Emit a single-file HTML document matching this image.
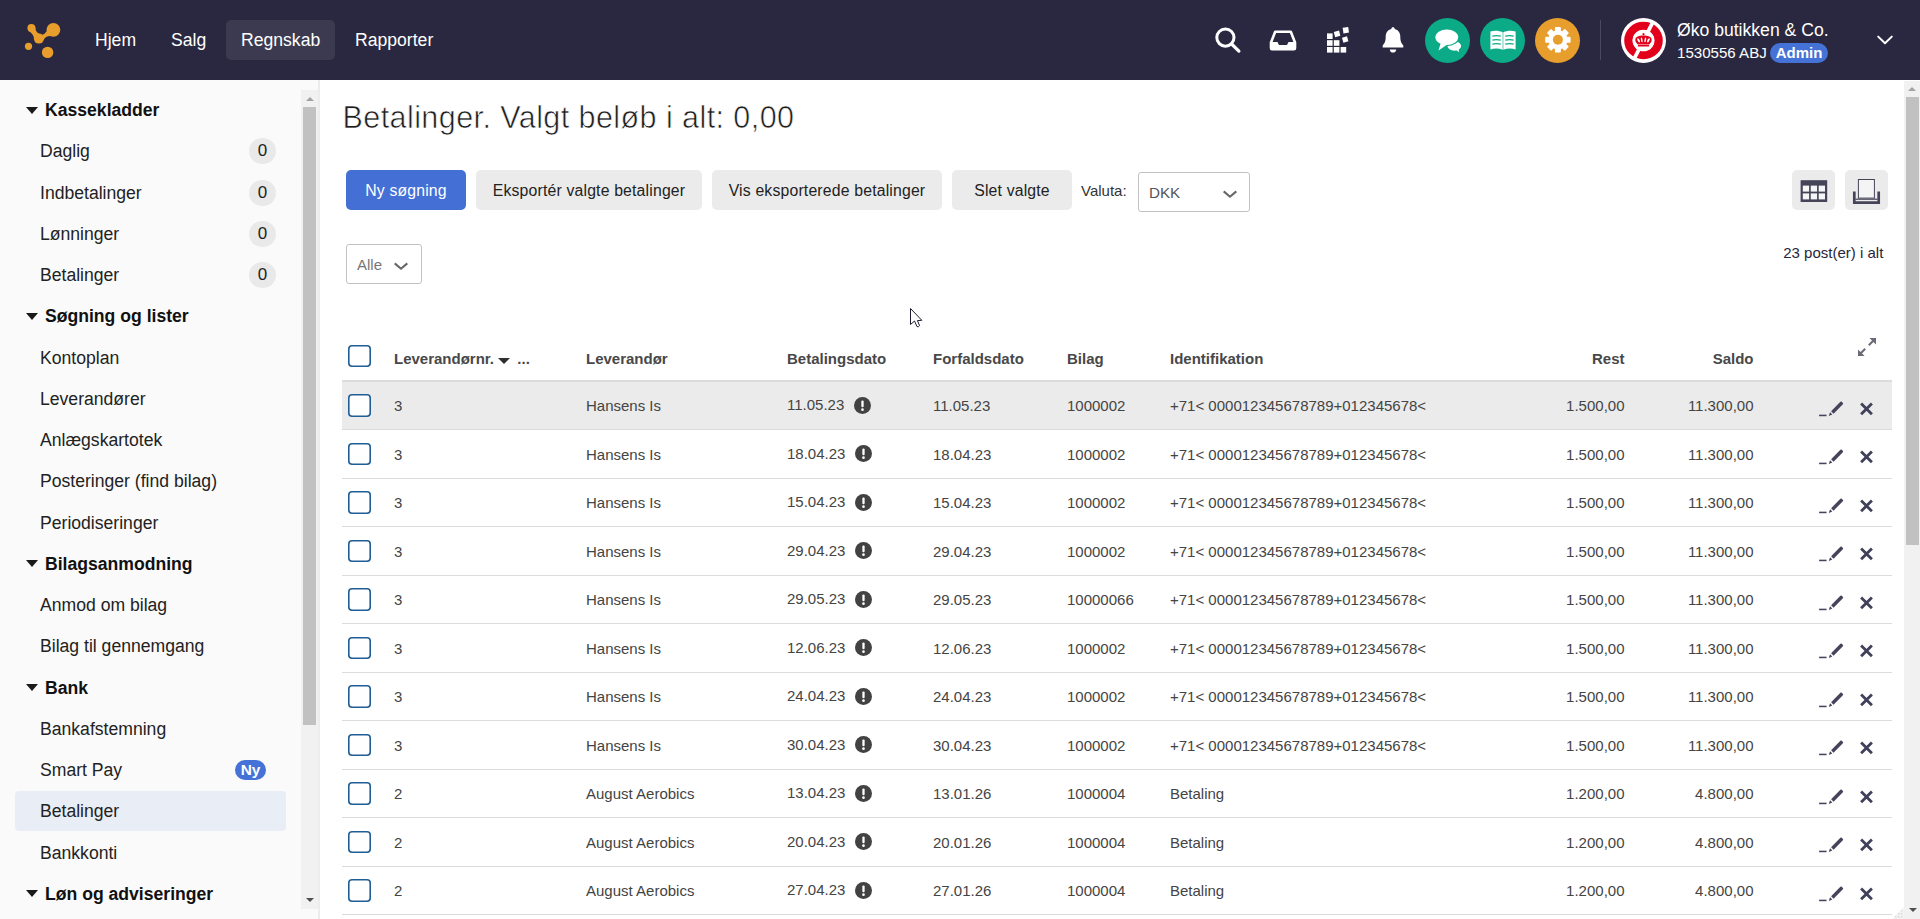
<!DOCTYPE html>
<html lang="da">
<head>
<meta charset="utf-8">
<title>Betalinger</title>
<style>
*{box-sizing:border-box;margin:0;padding:0}
html,body{width:1920px;height:919px;overflow:hidden;background:#fff;font-family:"Liberation Sans",Arial,sans-serif;color:#1f1f1f}
.abs{position:absolute}
/* header */
#hdr{position:absolute;left:0;top:0;width:1920px;height:80px;background:#2a2840;color:#fff}
#hdr .nav{position:absolute;top:26px;font-size:17.6px;line-height:28px;height:28px;white-space:nowrap}
#hdr .navsel{position:absolute;left:226px;top:20px;width:109px;height:40px;border-radius:5px;background:#3c3a50}
.circ{position:absolute;top:17.5px;width:45px;height:45px;border-radius:50%}
#cname{position:absolute;left:1677px;top:19px;font-size:17.6px;line-height:22px;white-space:nowrap}
#cnum{position:absolute;left:1677px;top:43px;font-size:15.1px;line-height:20px;white-space:nowrap}
#admin{position:absolute;left:1770px;top:43px;width:58px;height:20px;border-radius:10px;background:#4472d6;font-size:15px;font-weight:bold;line-height:20px;text-align:center}
/* sidebar */
#side{position:absolute;left:0;top:80px;width:320px;height:839px;background:#fafafa;border-right:2px solid #ececec;overflow:hidden}
#side .h{position:absolute;left:45px;font-size:17.6px;font-weight:bold;line-height:24px;height:24px;white-space:nowrap;color:#111}
#side .h:before{content:"";position:absolute;left:-19.2px;top:8.6px;border-left:6.6px solid transparent;border-right:6.6px solid transparent;border-top:7.6px solid #1a1a1a}
#side .i{position:absolute;left:40px;font-size:17.6px;line-height:24px;height:24px;white-space:nowrap;color:#222}
#side .b{position:absolute;left:249px;width:27px;height:26px;border-radius:13px;background:#e9e9e9;font-size:17px;line-height:26px;text-align:center;color:#222}
#side .sel{position:absolute;left:15px;top:711px;width:271px;height:40px;border-radius:4px;background:#e9edf6}
#side .ny{position:absolute;left:235px;top:680px;width:31px;height:20px;border-radius:10px;background:#4472d6;color:#fff;font-size:15.4px;font-weight:bold;line-height:19px;text-align:center}
/* main */
#main{position:absolute;left:320px;top:80px;width:1585px;height:839px;background:#fff;overflow:hidden}
#title{position:absolute;font-size:30.5px;line-height:40px;font-weight:normal;color:#1d1d1d;white-space:nowrap;letter-spacing:.43px;-webkit-text-stroke:.6px #fff}
.btn{position:absolute;top:90px;height:40px;border-radius:5px;background:#ebebeb;font-size:15.8px;letter-spacing:.17px;line-height:42px;text-align:center;color:#222;white-space:nowrap}
.btn.pri{background:#4470d6;color:#fff}
.selbox{position:absolute;border:1px solid #c2c2c2;border-radius:3px;background:#fff;font-size:15px;color:#555}
table{border-collapse:collapse}
#grid{position:absolute;left:20px;top:255px;width:1550px}
.row{position:absolute;left:0;width:1550px;border-bottom:1px solid #dcdcdc;font-size:15px;color:#444}
.row span{position:absolute;line-height:20px;white-space:nowrap}
.cb{position:absolute;width:23px;height:22.5px;box-shadow:inset 0 0 0 1.6px #1f5f96;border-radius:4px;background:#fff}
.th{position:absolute;top:.5px;font-size:15px;font-weight:bold;line-height:46px;color:#484848;white-space:nowrap}
#vsb{position:absolute;left:1904px;top:81px;width:16px;height:838px;background:#f1f1f1}
</style>
</head>
<body>
<div id="hdr">
<div class="abs" style="left:0;top:0;width:120px;height:80px">
<svg width="120" height="80" viewBox="0 0 120 80">
<g fill="#e89e2c">
<circle cx="31.4" cy="28" r="4"/>
<circle cx="53.4" cy="29.8" r="6.9"/>
<circle cx="38.9" cy="38.6" r="5"/>
<circle cx="28.5" cy="46.3" r="3.6"/>
<circle cx="47.6" cy="52.4" r="5.7"/>
<path d="M35.2 26.8 Q35.4 33.4 41.6 35 Q44.8 34.4 46.9 31 L50.5 35.9 Q45.2 36 43.7 40 L34 39.5 Q34.8 35.4 29.2 31.2 Z"/>
</g>
</svg>
</div>
<div class="navsel"></div>
<div class="nav" style="left:95px">Hjem</div>
<div class="nav" style="left:171px">Salg</div>
<div class="nav" style="left:241px">Regnskab</div>
<div class="nav" style="left:355px">Rapporter</div>
<!-- search -->
<svg class="abs" style="left:1212px;top:24px" width="32" height="32" viewBox="0 0 32 32"><circle cx="13.4" cy="13.6" r="8.6" fill="none" stroke="#fff" stroke-width="3"/><path d="M19.6 20 L26.9 27.1" stroke="#fff" stroke-width="3.2" stroke-linecap="round"/></svg>
<!-- inbox -->
<svg class="abs" style="left:1268px;top:28px" width="30" height="24" viewBox="0 0 30 24"><path d="M7.2 3.8 H22.8 L27 14.5 V20.2 Q27 21.3 25.9 21.3 H4.1 Q3 21.3 3 20.2 V14.5 Z" fill="none" stroke="#fff" stroke-width="2.6" stroke-linejoin="round"/><path d="M3 14 H9.5 L11 17 H19 L20.5 14 H27 V21 H3 Z" fill="#fff"/></svg>
<!-- grid -->
<svg class="abs" style="left:1325px;top:26px" width="26" height="28" viewBox="0 0 26 28"><g fill="#fff"><rect x="2" y="7.4" width="5.6" height="5.6"/><rect x="2" y="14.2" width="5.6" height="5.6"/><rect x="2" y="21" width="5.6" height="5.6"/><rect x="8.8" y="14.2" width="5.6" height="5.6"/><rect x="8.8" y="21" width="5.6" height="5.6"/><rect x="15.6" y="21" width="5.6" height="5.6"/><rect x="9.4" y="5.2" width="5.4" height="5.4" transform="rotate(-14 12 8)"/><rect x="18" y="1.4" width="5.6" height="5.6" transform="rotate(-8 21 4)"/><rect x="17.6" y="11" width="5.2" height="5.2" transform="rotate(-16 20 13.6)"/></g></svg>
<!-- bell -->
<svg class="abs" style="left:1381px;top:26px" width="24" height="28" viewBox="0 0 24 28"><path d="M12 1.2 C13 1.2 13.7 1.9 13.7 2.9 C17.3 3.8 19.3 6.9 19.3 10.6 C19.3 15.6 20.4 17.6 22.3 19.4 V21.6 H1.7 V19.4 C3.6 17.6 4.7 15.6 4.7 10.6 C4.7 6.9 6.7 3.8 10.3 2.9 C10.3 1.9 11 1.2 12 1.2 Z" fill="#fff"/><path d="M8.8 23.4 H15.2 C15.2 25.2 13.8 26.6 12 26.6 C10.2 26.6 8.8 25.2 8.8 23.4 Z" fill="#fff"/></svg>
<!-- chat -->
<div class="circ" style="left:1425px;background:#0bab87"></div>
<svg class="abs" style="left:1425px;top:17.5px" width="45" height="45" viewBox="0 0 45 45"><g fill="#fff"><ellipse cx="29.3" cy="28" rx="6.8" ry="4.7"/><path d="M30.6 31.6 L34 34.3 L33.6 29.6 Z"/><ellipse cx="21.8" cy="19.2" rx="12.6" ry="8.9" fill="#0bab87"/><ellipse cx="21.8" cy="19.2" rx="11.4" ry="7.7"/><path d="M15.9 24.6 L13.5 32.5 L22.4 26.6 Z"/></g></svg>
<!-- book -->
<div class="circ" style="left:1480px;background:#0bab87"></div>
<svg class="abs" style="left:1480px;top:17.5px" width="45" height="45" viewBox="0 0 45 45"><path d="M10.4 13.4 C14.4 12.2 18.8 12.4 22.7 14.2 V31.8 C18.8 30.2 14.4 30.2 10.4 31.4 Z M35.6 13.4 C31.6 12.2 27.2 12.4 23.3 14.2 V31.8 C27.2 30.2 31.6 30.2 35.6 31.4 Z" fill="#fff"/><g stroke="#0bab87" stroke-width="1.25" fill="none"><path d="M12.3 18.1 C15.2 17.3 18 17.4 20.8 18.2 M12.3 22.1 C15.2 21.3 18 21.4 20.8 22.2 M12.3 26.1 C15.2 25.3 18 25.4 20.8 26.2"/><path d="M33.7 18.1 C30.8 17.3 28 17.4 25.2 18.2 M33.7 22.1 C30.8 21.3 28 21.4 25.2 22.2 M33.7 26.1 C30.8 25.3 28 25.4 25.2 26.2"/></g></svg>
<!-- gear -->
<div class="circ" style="left:1535px;background:#e89e2c"></div>
<svg class="abs" style="left:1535px;top:17.5px" width="45" height="45" viewBox="0 0 45 45"><g transform="translate(22.9 21.8)"><g fill="#fff"><rect x="-3" y="-12.7" width="6" height="25.4" rx="1"/><rect x="-3" y="-12.7" width="6" height="25.4" rx="1" transform="rotate(45)"/><rect x="-3" y="-12.7" width="6" height="25.4" rx="1" transform="rotate(90)"/><rect x="-3" y="-12.7" width="6" height="25.4" rx="1" transform="rotate(135)"/><circle r="9.6"/></g><circle r="5" fill="#e89e2c"/></g></svg>
<div class="abs" style="left:1600px;top:20px;width:1px;height:40px;background:#4a485c"></div>
<!-- company logo -->
<svg class="abs" style="left:1621.3px;top:17.7px" width="45" height="45" viewBox="0 0 45 45"><circle cx="22.5" cy="22.5" r="22.5" fill="#fff"/><ellipse cx="22.5" cy="22.5" rx="15.1" ry="14.6" fill="none" stroke="#e3001b" stroke-width="8.4"/><clipPath id="lc"><circle cx="22.5" cy="22.5" r="22"/></clipPath><path d="M12 43.2 L33 1.8" stroke="#fff" stroke-width="3.7" clip-path="url(#lc)"/><circle cx="22.5" cy="22.5" r="10.8" fill="#fff"/><g fill="#e3001b"><path d="M14.3 22 C14.3 18.7 18.3 17.6 22.5 17.6 C26.7 17.6 30.7 18.7 30.7 22 C30.7 24.2 28.8 25.7 28.2 26.4 H16.8 C16.2 25.7 14.3 24.2 14.3 22 Z"/><rect x="16.9" y="26.9" width="11.2" height="1.7" rx=".5"/><circle cx="22.5" cy="16.2" r="1.1"/></g><g fill="#fff"><ellipse cx="17.6" cy="22.3" rx="1" ry="2.3" transform="rotate(-28 17.6 22.3)"/><ellipse cx="20.7" cy="21.9" rx=".8" ry="2.5" transform="rotate(-10 20.7 21.9)"/><ellipse cx="24.3" cy="21.9" rx=".8" ry="2.5" transform="rotate(10 24.3 21.9)"/><ellipse cx="27.4" cy="22.3" rx="1" ry="2.3" transform="rotate(28 27.4 22.3)"/></g></svg>
<div id="cname">Øko butikken &amp; Co.</div>
<div id="cnum">1530556 ABJ</div>
<div id="admin">Admin</div>
<svg class="abs" style="left:1874px;top:32px" width="22" height="16" viewBox="0 0 22 16"><path d="M4.2 4.6 L11 11.2 L17.8 4.6" fill="none" stroke="#fff" stroke-width="2" stroke-linecap="round" stroke-linejoin="round"/></svg>
</div>
<div id="side">
<div class="sel"></div>
<div class="h" style="top:18px">Kassekladder</div>
<div class="i" style="top:59px">Daglig</div>
<div class="b" style="top:58px">0</div>
<div class="i" style="top:100.5px">Indbetalinger</div>
<div class="b" style="top:99.5px">0</div>
<div class="i" style="top:141.5px">Lønninger</div>
<div class="b" style="top:140.5px">0</div>
<div class="i" style="top:183px">Betalinger</div>
<div class="b" style="top:182px">0</div>
<div class="h" style="top:224px">Søgning og lister</div>
<div class="i" style="top:265.5px">Kontoplan</div>
<div class="i" style="top:306.5px">Leverandører</div>
<div class="i" style="top:348px">Anlægskartotek</div>
<div class="i" style="top:389px">Posteringer (find bilag)</div>
<div class="i" style="top:430.5px">Periodiseringer</div>
<div class="h" style="top:471.5px">Bilagsanmodning</div>
<div class="i" style="top:513px">Anmod om bilag</div>
<div class="i" style="top:554px">Bilag til gennemgang</div>
<div class="h" style="top:595.5px">Bank</div>
<div class="i" style="top:636.5px">Bankafstemning</div>
<div class="i" style="top:678px">Smart Pay</div>
<div class="i" style="top:719px">Betalinger</div>
<div class="i" style="top:760.5px">Bankkonti</div>
<div class="h" style="top:801.5px">Løn og adviseringer</div>
<div class="ny">Ny</div>
<div class="abs" style="left:301px;top:10px;width:17px;height:819px;background:#f1f1f1"></div>
<div class="abs" style="left:303px;top:27px;width:13px;height:618px;background:#c1c1c1"></div>
<div class="abs" style="left:305.5px;top:17px;border-left:4px solid transparent;border-right:4px solid transparent;border-bottom:4px solid #a3a3a3"></div>
<div class="abs" style="left:305.5px;top:818px;border-left:4px solid transparent;border-right:4px solid transparent;border-top:4px solid #505050"></div>
</div>
<div id="main">
<div id="title" style="left:22.5px;top:17.4px">Betalinger. Valgt beløb i alt: 0,00</div>
<div class="btn pri" style="left:26px;width:120px">Ny søgning</div>
<div class="btn " style="left:156px;width:226px">Eksportér valgte betalinger</div>
<div class="btn " style="left:392px;width:230px">Vis eksporterede betalinger</div>
<div class="btn " style="left:632px;width:120px">Slet valgte</div>
<div class="abs" style="left:761px;top:101px;font-size:15px;line-height:20px;color:#333">Valuta:</div>
<div class="selbox" style="left:818px;top:92px;width:112px;height:40px;line-height:40px;padding-left:10px;font-size:15.2px">DKK<svg class="abs" style="left:83px;top:15px" width="16" height="12" viewBox="0 0 16 12"><path d="M1.7 3.4 L8 8.7 L14.3 3.4" fill="none" stroke="#666" stroke-width="2.1" stroke-linecap="butt" stroke-linejoin="miter"/></svg></div>
<div class="btn" style="left:1472px;width:43px"><svg class="abs" style="left:8px;top:9px" width="28" height="24" viewBox="0 0 28 24"><rect x="0.6" y="1.2" width="26.6" height="21.8" fill="#454459"/><g fill="#f6f6f6"><rect x="2.8" y="6.6" width="6.3" height="6"/><rect x="10.75" y="6.6" width="6.3" height="6"/><rect x="18.7" y="6.6" width="6.3" height="6"/><rect x="2.8" y="14.4" width="6.3" height="6"/><rect x="10.75" y="14.4" width="6.3" height="6"/><rect x="18.7" y="14.4" width="6.3" height="6"/></g></svg></div>
<div class="btn" style="left:1525px;width:43px"><svg class="abs" style="left:7px;top:8px" width="29" height="27" viewBox="0 0 29 27"><rect x="6.4" y="1.5" width="16" height="18.6" fill="#f4f4f4" stroke="#454459" stroke-width="1"/><path d="M2.3 13.6 V24.6 H26.7 V13.6" fill="none" stroke="#454459" stroke-width="2.7"/><path d="M3.4 21.2 H25.6" stroke="#454459" stroke-width="1.2"/></svg></div>
<div class="selbox" style="left:26px;top:164px;width:76px;height:40px;line-height:40px;padding-left:10px;font-size:15px;color:#777">Alle<svg class="abs" style="left:46px;top:14.5px" width="16" height="12" viewBox="0 0 16 12"><path d="M1.7 3.4 L8 8.7 L14.3 3.4" fill="none" stroke="#666" stroke-width="2.1" stroke-linecap="butt" stroke-linejoin="miter"/></svg></div>
<div class="abs" style="right:21.7px;top:163px;font-size:15px;line-height:20px;color:#26263a;white-space:nowrap">23 post(er) i alt</div>
<svg class="abs" style="left:588px;top:226px" width="16" height="24" viewBox="0 0 16 24"><path d="M2.5 2.5 L2.5 18.5 L6.5 15 L9 20.6 Q10.5 21.3 11.6 19.6 L9.4 14.6 L13.8 14.3 Z" fill="#fff" stroke="#1c1c30" stroke-width="1" stroke-linejoin="round"/></svg>
<div id="grid" style="left:22px;top:255px"><div class="cb" style="left:6px;top:10px;height:22px"></div>
<div class="th" style="left:52px">Leverandørnr. <span style="display:inline-block;width:0;height:0;border-left:6px solid transparent;border-right:6px solid transparent;border-top:6.5px solid #2e2e2e;margin:0 3px 0 0;vertical-align:0"></span> ...</div>
<div class="th" style="left:244px">Leverandør</div>
<div class="th" style="left:445px">Betalingsdato</div>
<div class="th" style="left:591px">Forfaldsdato</div>
<div class="th" style="left:725px">Bilag</div>
<div class="th" style="left:828px">Identifikation</div>
<div class="th" style="right:267.5px">Rest</div>
<div class="th" style="right:138.5px">Saldo</div>
<svg class="abs" style="left:1514px;top:1px" width="22" height="22" viewBox="0 0 22 22"><g fill="#6b6b78" stroke="#6b6b78"><path d="M12.8 9.2 L18 4" stroke-width="2" fill="none"/><path d="M13.4 2 H20 V8.6 Z" stroke="none"/><path d="M9.2 12.8 L4 18" stroke-width="2" fill="none"/><path d="M8.6 20 H2 V13.4 Z" stroke="none"/></g></svg>
<div class="abs" style="left:0;top:45px;width:1550px;height:2px;background:#dcdcdc"></div>
<div class="row" style="top:47px;height:48px;background:#ebebeb"><div class="cb" style="left:6px;top:12.0px"></div><span style="left:52px;top:13.5px">3</span><span style="left:244px;top:13.5px">Hansens Is</span><span style="left:445px;top:12.5px">11.05.23</span><svg class="abs" style="left:512.2px;top:14.9px" width="17" height="17" viewBox="0 0 17 17"><circle cx="8.5" cy="8.5" r="8.5" fill="#424242"/><rect x="7.35" y="3.4" width="2.3" height="6.8" rx="1" fill="#fff"/><circle cx="8.5" cy="12.7" r="1.35" fill="#fff"/></svg><span style="left:591px;top:13.5px">11.05.23</span><span style="left:725px;top:13.5px">1000002</span><span style="left:828px;top:13.5px">+71&lt; 000012345678789+012345678&lt;</span><span style="right:267.5px;top:13.5px">1.500,00</span><span style="right:138.5px;top:13.5px">11.300,00</span><svg class="abs" style="left:1475px;top:17.6px" width="29" height="18.6" viewBox="0 0 28 18"><g fill="#45445a"><rect x="2" y="14.2" width="7.2" height="1.5"/><path d="M11.4 15.6 L12.6 11.8 L14.8 14 Z"/><path d="M13.6 10.8 L22.6 1.8 Q23.3 1.1 24 1.8 L25 2.8 Q25.7 3.5 25 4.2 L16 13.2 Z"/></g></svg><svg class="abs" style="left:1516px;top:18.9px" width="16" height="16" viewBox="0 0 16 16"><path d="M4.1 3.55 L12.9 12.25 M12.9 3.55 L4.1 12.25" stroke="#40405a" stroke-width="2.8" stroke-linecap="square" fill="none"/></svg></div>
<div class="row" style="top:95px;height:49px"><div class="cb" style="left:6px;top:12.5px"></div><span style="left:52px;top:14.5px">3</span><span style="left:244px;top:14.5px">Hansens Is</span><span style="left:445px;top:13.5px">18.04.23</span><svg class="abs" style="left:513.2px;top:14.9px" width="17" height="17" viewBox="0 0 17 17"><circle cx="8.5" cy="8.5" r="8.5" fill="#424242"/><rect x="7.35" y="3.4" width="2.3" height="6.8" rx="1" fill="#fff"/><circle cx="8.5" cy="12.7" r="1.35" fill="#fff"/></svg><span style="left:591px;top:14.5px">18.04.23</span><span style="left:725px;top:14.5px">1000002</span><span style="left:828px;top:14.5px">+71&lt; 000012345678789+012345678&lt;</span><span style="right:267.5px;top:14.5px">1.500,00</span><span style="right:138.5px;top:14.5px">11.300,00</span><svg class="abs" style="left:1475px;top:17.6px" width="29" height="18.6" viewBox="0 0 28 18"><g fill="#45445a"><rect x="2" y="14.2" width="7.2" height="1.5"/><path d="M11.4 15.6 L12.6 11.8 L14.8 14 Z"/><path d="M13.6 10.8 L22.6 1.8 Q23.3 1.1 24 1.8 L25 2.8 Q25.7 3.5 25 4.2 L16 13.2 Z"/></g></svg><svg class="abs" style="left:1516px;top:18.9px" width="16" height="16" viewBox="0 0 16 16"><path d="M4.1 3.55 L12.9 12.25 M12.9 3.55 L4.1 12.25" stroke="#40405a" stroke-width="2.8" stroke-linecap="square" fill="none"/></svg></div>
<div class="row" style="top:144px;height:48px"><div class="cb" style="left:6px;top:12.0px"></div><span style="left:52px;top:13.5px">3</span><span style="left:244px;top:13.5px">Hansens Is</span><span style="left:445px;top:12.5px">15.04.23</span><svg class="abs" style="left:513.2px;top:14.9px" width="17" height="17" viewBox="0 0 17 17"><circle cx="8.5" cy="8.5" r="8.5" fill="#424242"/><rect x="7.35" y="3.4" width="2.3" height="6.8" rx="1" fill="#fff"/><circle cx="8.5" cy="12.7" r="1.35" fill="#fff"/></svg><span style="left:591px;top:13.5px">15.04.23</span><span style="left:725px;top:13.5px">1000002</span><span style="left:828px;top:13.5px">+71&lt; 000012345678789+012345678&lt;</span><span style="right:267.5px;top:13.5px">1.500,00</span><span style="right:138.5px;top:13.5px">11.300,00</span><svg class="abs" style="left:1475px;top:17.6px" width="29" height="18.6" viewBox="0 0 28 18"><g fill="#45445a"><rect x="2" y="14.2" width="7.2" height="1.5"/><path d="M11.4 15.6 L12.6 11.8 L14.8 14 Z"/><path d="M13.6 10.8 L22.6 1.8 Q23.3 1.1 24 1.8 L25 2.8 Q25.7 3.5 25 4.2 L16 13.2 Z"/></g></svg><svg class="abs" style="left:1516px;top:18.9px" width="16" height="16" viewBox="0 0 16 16"><path d="M4.1 3.55 L12.9 12.25 M12.9 3.55 L4.1 12.25" stroke="#40405a" stroke-width="2.8" stroke-linecap="square" fill="none"/></svg></div>
<div class="row" style="top:192px;height:49px"><div class="cb" style="left:6px;top:12.5px"></div><span style="left:52px;top:14.5px">3</span><span style="left:244px;top:14.5px">Hansens Is</span><span style="left:445px;top:13.5px">29.04.23</span><svg class="abs" style="left:513.2px;top:14.9px" width="17" height="17" viewBox="0 0 17 17"><circle cx="8.5" cy="8.5" r="8.5" fill="#424242"/><rect x="7.35" y="3.4" width="2.3" height="6.8" rx="1" fill="#fff"/><circle cx="8.5" cy="12.7" r="1.35" fill="#fff"/></svg><span style="left:591px;top:14.5px">29.04.23</span><span style="left:725px;top:14.5px">1000002</span><span style="left:828px;top:14.5px">+71&lt; 000012345678789+012345678&lt;</span><span style="right:267.5px;top:14.5px">1.500,00</span><span style="right:138.5px;top:14.5px">11.300,00</span><svg class="abs" style="left:1475px;top:17.6px" width="29" height="18.6" viewBox="0 0 28 18"><g fill="#45445a"><rect x="2" y="14.2" width="7.2" height="1.5"/><path d="M11.4 15.6 L12.6 11.8 L14.8 14 Z"/><path d="M13.6 10.8 L22.6 1.8 Q23.3 1.1 24 1.8 L25 2.8 Q25.7 3.5 25 4.2 L16 13.2 Z"/></g></svg><svg class="abs" style="left:1516px;top:18.9px" width="16" height="16" viewBox="0 0 16 16"><path d="M4.1 3.55 L12.9 12.25 M12.9 3.55 L4.1 12.25" stroke="#40405a" stroke-width="2.8" stroke-linecap="square" fill="none"/></svg></div>
<div class="row" style="top:241px;height:48px"><div class="cb" style="left:6px;top:12.0px"></div><span style="left:52px;top:13.5px">3</span><span style="left:244px;top:13.5px">Hansens Is</span><span style="left:445px;top:12.5px">29.05.23</span><svg class="abs" style="left:513.2px;top:14.9px" width="17" height="17" viewBox="0 0 17 17"><circle cx="8.5" cy="8.5" r="8.5" fill="#424242"/><rect x="7.35" y="3.4" width="2.3" height="6.8" rx="1" fill="#fff"/><circle cx="8.5" cy="12.7" r="1.35" fill="#fff"/></svg><span style="left:591px;top:13.5px">29.05.23</span><span style="left:725px;top:13.5px">10000066</span><span style="left:828px;top:13.5px">+71&lt; 000012345678789+012345678&lt;</span><span style="right:267.5px;top:13.5px">1.500,00</span><span style="right:138.5px;top:13.5px">11.300,00</span><svg class="abs" style="left:1475px;top:17.6px" width="29" height="18.6" viewBox="0 0 28 18"><g fill="#45445a"><rect x="2" y="14.2" width="7.2" height="1.5"/><path d="M11.4 15.6 L12.6 11.8 L14.8 14 Z"/><path d="M13.6 10.8 L22.6 1.8 Q23.3 1.1 24 1.8 L25 2.8 Q25.7 3.5 25 4.2 L16 13.2 Z"/></g></svg><svg class="abs" style="left:1516px;top:18.9px" width="16" height="16" viewBox="0 0 16 16"><path d="M4.1 3.55 L12.9 12.25 M12.9 3.55 L4.1 12.25" stroke="#40405a" stroke-width="2.8" stroke-linecap="square" fill="none"/></svg></div>
<div class="row" style="top:289px;height:49px"><div class="cb" style="left:6px;top:12.5px"></div><span style="left:52px;top:14.5px">3</span><span style="left:244px;top:14.5px">Hansens Is</span><span style="left:445px;top:13.5px">12.06.23</span><svg class="abs" style="left:513.2px;top:14.9px" width="17" height="17" viewBox="0 0 17 17"><circle cx="8.5" cy="8.5" r="8.5" fill="#424242"/><rect x="7.35" y="3.4" width="2.3" height="6.8" rx="1" fill="#fff"/><circle cx="8.5" cy="12.7" r="1.35" fill="#fff"/></svg><span style="left:591px;top:14.5px">12.06.23</span><span style="left:725px;top:14.5px">1000002</span><span style="left:828px;top:14.5px">+71&lt; 000012345678789+012345678&lt;</span><span style="right:267.5px;top:14.5px">1.500,00</span><span style="right:138.5px;top:14.5px">11.300,00</span><svg class="abs" style="left:1475px;top:17.6px" width="29" height="18.6" viewBox="0 0 28 18"><g fill="#45445a"><rect x="2" y="14.2" width="7.2" height="1.5"/><path d="M11.4 15.6 L12.6 11.8 L14.8 14 Z"/><path d="M13.6 10.8 L22.6 1.8 Q23.3 1.1 24 1.8 L25 2.8 Q25.7 3.5 25 4.2 L16 13.2 Z"/></g></svg><svg class="abs" style="left:1516px;top:18.9px" width="16" height="16" viewBox="0 0 16 16"><path d="M4.1 3.55 L12.9 12.25 M12.9 3.55 L4.1 12.25" stroke="#40405a" stroke-width="2.8" stroke-linecap="square" fill="none"/></svg></div>
<div class="row" style="top:338px;height:48px"><div class="cb" style="left:6px;top:12.0px"></div><span style="left:52px;top:13.5px">3</span><span style="left:244px;top:13.5px">Hansens Is</span><span style="left:445px;top:12.5px">24.04.23</span><svg class="abs" style="left:513.2px;top:14.9px" width="17" height="17" viewBox="0 0 17 17"><circle cx="8.5" cy="8.5" r="8.5" fill="#424242"/><rect x="7.35" y="3.4" width="2.3" height="6.8" rx="1" fill="#fff"/><circle cx="8.5" cy="12.7" r="1.35" fill="#fff"/></svg><span style="left:591px;top:13.5px">24.04.23</span><span style="left:725px;top:13.5px">1000002</span><span style="left:828px;top:13.5px">+71&lt; 000012345678789+012345678&lt;</span><span style="right:267.5px;top:13.5px">1.500,00</span><span style="right:138.5px;top:13.5px">11.300,00</span><svg class="abs" style="left:1475px;top:17.6px" width="29" height="18.6" viewBox="0 0 28 18"><g fill="#45445a"><rect x="2" y="14.2" width="7.2" height="1.5"/><path d="M11.4 15.6 L12.6 11.8 L14.8 14 Z"/><path d="M13.6 10.8 L22.6 1.8 Q23.3 1.1 24 1.8 L25 2.8 Q25.7 3.5 25 4.2 L16 13.2 Z"/></g></svg><svg class="abs" style="left:1516px;top:18.9px" width="16" height="16" viewBox="0 0 16 16"><path d="M4.1 3.55 L12.9 12.25 M12.9 3.55 L4.1 12.25" stroke="#40405a" stroke-width="2.8" stroke-linecap="square" fill="none"/></svg></div>
<div class="row" style="top:386px;height:49px"><div class="cb" style="left:6px;top:12.5px"></div><span style="left:52px;top:14.5px">3</span><span style="left:244px;top:14.5px">Hansens Is</span><span style="left:445px;top:13.5px">30.04.23</span><svg class="abs" style="left:513.2px;top:14.9px" width="17" height="17" viewBox="0 0 17 17"><circle cx="8.5" cy="8.5" r="8.5" fill="#424242"/><rect x="7.35" y="3.4" width="2.3" height="6.8" rx="1" fill="#fff"/><circle cx="8.5" cy="12.7" r="1.35" fill="#fff"/></svg><span style="left:591px;top:14.5px">30.04.23</span><span style="left:725px;top:14.5px">1000002</span><span style="left:828px;top:14.5px">+71&lt; 000012345678789+012345678&lt;</span><span style="right:267.5px;top:14.5px">1.500,00</span><span style="right:138.5px;top:14.5px">11.300,00</span><svg class="abs" style="left:1475px;top:17.6px" width="29" height="18.6" viewBox="0 0 28 18"><g fill="#45445a"><rect x="2" y="14.2" width="7.2" height="1.5"/><path d="M11.4 15.6 L12.6 11.8 L14.8 14 Z"/><path d="M13.6 10.8 L22.6 1.8 Q23.3 1.1 24 1.8 L25 2.8 Q25.7 3.5 25 4.2 L16 13.2 Z"/></g></svg><svg class="abs" style="left:1516px;top:18.9px" width="16" height="16" viewBox="0 0 16 16"><path d="M4.1 3.55 L12.9 12.25 M12.9 3.55 L4.1 12.25" stroke="#40405a" stroke-width="2.8" stroke-linecap="square" fill="none"/></svg></div>
<div class="row" style="top:435px;height:48px"><div class="cb" style="left:6px;top:12.0px"></div><span style="left:52px;top:13.5px">2</span><span style="left:244px;top:13.5px">August Aerobics</span><span style="left:445px;top:12.5px">13.04.23</span><svg class="abs" style="left:513.2px;top:14.9px" width="17" height="17" viewBox="0 0 17 17"><circle cx="8.5" cy="8.5" r="8.5" fill="#424242"/><rect x="7.35" y="3.4" width="2.3" height="6.8" rx="1" fill="#fff"/><circle cx="8.5" cy="12.7" r="1.35" fill="#fff"/></svg><span style="left:591px;top:13.5px">13.01.26</span><span style="left:725px;top:13.5px">1000004</span><span style="left:828px;top:13.5px">Betaling</span><span style="right:267.5px;top:13.5px">1.200,00</span><span style="right:138.5px;top:13.5px">4.800,00</span><svg class="abs" style="left:1475px;top:17.6px" width="29" height="18.6" viewBox="0 0 28 18"><g fill="#45445a"><rect x="2" y="14.2" width="7.2" height="1.5"/><path d="M11.4 15.6 L12.6 11.8 L14.8 14 Z"/><path d="M13.6 10.8 L22.6 1.8 Q23.3 1.1 24 1.8 L25 2.8 Q25.7 3.5 25 4.2 L16 13.2 Z"/></g></svg><svg class="abs" style="left:1516px;top:18.9px" width="16" height="16" viewBox="0 0 16 16"><path d="M4.1 3.55 L12.9 12.25 M12.9 3.55 L4.1 12.25" stroke="#40405a" stroke-width="2.8" stroke-linecap="square" fill="none"/></svg></div>
<div class="row" style="top:483px;height:49px"><div class="cb" style="left:6px;top:12.5px"></div><span style="left:52px;top:14.5px">2</span><span style="left:244px;top:14.5px">August Aerobics</span><span style="left:445px;top:13.5px">20.04.23</span><svg class="abs" style="left:513.2px;top:14.9px" width="17" height="17" viewBox="0 0 17 17"><circle cx="8.5" cy="8.5" r="8.5" fill="#424242"/><rect x="7.35" y="3.4" width="2.3" height="6.8" rx="1" fill="#fff"/><circle cx="8.5" cy="12.7" r="1.35" fill="#fff"/></svg><span style="left:591px;top:14.5px">20.01.26</span><span style="left:725px;top:14.5px">1000004</span><span style="left:828px;top:14.5px">Betaling</span><span style="right:267.5px;top:14.5px">1.200,00</span><span style="right:138.5px;top:14.5px">4.800,00</span><svg class="abs" style="left:1475px;top:17.6px" width="29" height="18.6" viewBox="0 0 28 18"><g fill="#45445a"><rect x="2" y="14.2" width="7.2" height="1.5"/><path d="M11.4 15.6 L12.6 11.8 L14.8 14 Z"/><path d="M13.6 10.8 L22.6 1.8 Q23.3 1.1 24 1.8 L25 2.8 Q25.7 3.5 25 4.2 L16 13.2 Z"/></g></svg><svg class="abs" style="left:1516px;top:18.9px" width="16" height="16" viewBox="0 0 16 16"><path d="M4.1 3.55 L12.9 12.25 M12.9 3.55 L4.1 12.25" stroke="#40405a" stroke-width="2.8" stroke-linecap="square" fill="none"/></svg></div>
<div class="row" style="top:532px;height:48px"><div class="cb" style="left:6px;top:12.0px"></div><span style="left:52px;top:13.5px">2</span><span style="left:244px;top:13.5px">August Aerobics</span><span style="left:445px;top:12.5px">27.04.23</span><svg class="abs" style="left:513.2px;top:14.9px" width="17" height="17" viewBox="0 0 17 17"><circle cx="8.5" cy="8.5" r="8.5" fill="#424242"/><rect x="7.35" y="3.4" width="2.3" height="6.8" rx="1" fill="#fff"/><circle cx="8.5" cy="12.7" r="1.35" fill="#fff"/></svg><span style="left:591px;top:13.5px">27.01.26</span><span style="left:725px;top:13.5px">1000004</span><span style="left:828px;top:13.5px">Betaling</span><span style="right:267.5px;top:13.5px">1.200,00</span><span style="right:138.5px;top:13.5px">4.800,00</span><svg class="abs" style="left:1475px;top:17.6px" width="29" height="18.6" viewBox="0 0 28 18"><g fill="#45445a"><rect x="2" y="14.2" width="7.2" height="1.5"/><path d="M11.4 15.6 L12.6 11.8 L14.8 14 Z"/><path d="M13.6 10.8 L22.6 1.8 Q23.3 1.1 24 1.8 L25 2.8 Q25.7 3.5 25 4.2 L16 13.2 Z"/></g></svg><svg class="abs" style="left:1516px;top:18.9px" width="16" height="16" viewBox="0 0 16 16"><path d="M4.1 3.55 L12.9 12.25 M12.9 3.55 L4.1 12.25" stroke="#40405a" stroke-width="2.8" stroke-linecap="square" fill="none"/></svg></div>
<div class="row" style="top:580px;height:49px"><div class="cb" style="left:6px;top:12.5px"></div><span style="left:52px;top:14.5px">2</span><span style="left:244px;top:14.5px">August Aerobics</span><span style="left:445px;top:13.5px">04.05.23</span><svg class="abs" style="left:513.2px;top:14.9px" width="17" height="17" viewBox="0 0 17 17"><circle cx="8.5" cy="8.5" r="8.5" fill="#424242"/><rect x="7.35" y="3.4" width="2.3" height="6.8" rx="1" fill="#fff"/><circle cx="8.5" cy="12.7" r="1.35" fill="#fff"/></svg><span style="left:591px;top:14.5px">04.02.26</span><span style="left:725px;top:14.5px">1000004</span><span style="left:828px;top:14.5px">Betaling</span><span style="right:267.5px;top:14.5px">1.200,00</span><span style="right:138.5px;top:14.5px">4.800,00</span><svg class="abs" style="left:1475px;top:17.6px" width="29" height="18.6" viewBox="0 0 28 18"><g fill="#45445a"><rect x="2" y="14.2" width="7.2" height="1.5"/><path d="M11.4 15.6 L12.6 11.8 L14.8 14 Z"/><path d="M13.6 10.8 L22.6 1.8 Q23.3 1.1 24 1.8 L25 2.8 Q25.7 3.5 25 4.2 L16 13.2 Z"/></g></svg><svg class="abs" style="left:1516px;top:18.9px" width="16" height="16" viewBox="0 0 16 16"><path d="M4.1 3.55 L12.9 12.25 M12.9 3.55 L4.1 12.25" stroke="#40405a" stroke-width="2.8" stroke-linecap="square" fill="none"/></svg></div></div>
</div>
<svg id="grip" class="abs" style="left:1892px;top:907px" width="12" height="12" viewBox="0 0 12 12"><path d="M12 0 V12 H0 Z" fill="#f3f3f3"/><g fill="#d9d9d9"><rect x="9" y="3" width="1.5" height="1.5"/><rect x="6" y="6" width="1.5" height="1.5"/><rect x="9" y="6" width="1.5" height="1.5"/><rect x="3" y="9" width="1.5" height="1.5"/><rect x="6" y="9" width="1.5" height="1.5"/><rect x="9" y="9" width="1.5" height="1.5"/></g></svg>
<div id="vsb"><div class="abs" style="left:2px;top:16px;width:13px;height:448px;background:#c1c1c1"></div><div class="abs" style="left:4px;top:6px;border-left:4px solid transparent;border-right:4px solid transparent;border-bottom:4px solid #a3a3a3"></div><div class="abs" style="left:4.5px;top:827px;border-left:4px solid transparent;border-right:4px solid transparent;border-top:4px solid #505050"></div></div>

</body>
</html>
